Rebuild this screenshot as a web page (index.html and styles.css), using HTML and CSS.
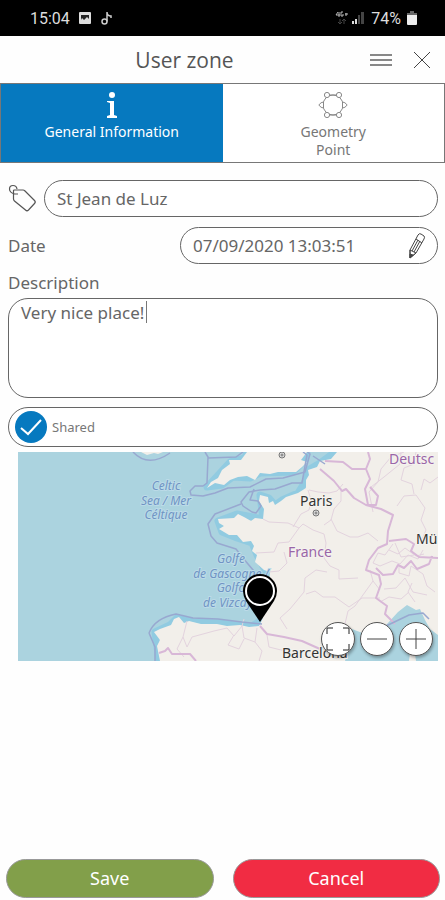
FILE: index.html
```html
<!DOCTYPE html>
<html lang="en">

<head>
    <meta charset="UTF-8">
    <meta name="viewport" content="width=device-width, initial-scale=1.0">
    <title>User zone</title>
    <link rel="stylesheet" href="styles.css">
</head>

<body>
    <div class="status-bar">
        <div class="status-group">
            <span>15:04</span>
            <svg width="14" height="14" viewBox="0 0 14 14">
                <rect x="1" y="1" width="12" height="12" rx="1" fill="#ddd"/>
                <path d="M3 4h8v4L9 6 6 9 4 7l-1 2z" fill="#222"/>
            </svg>
            <svg width="14" height="16" viewBox="0 0 14 16" fill="none" stroke="#ccc" stroke-width="1.500">
                <circle cx="4.500" cy="11.500" r="2.500"/>
                <path d="M7 11.500V2c0 3 2 4 4 4v2"/>
            </svg>
        </div>
        <div class="status-group status-right">
            <svg width="30" height="16" viewBox="0 0 30 16">
                <path d="M3 2L1 5h4M4 2v5M8 2H6v4h2V4M10 4h3M11 3v3" fill="none" stroke="#bbb"/>
                <path d="M5 9v5M3 12l2 2 2-2M9 14V9M7 11l2-2 2 2" fill="none" stroke="#444"/>
                <path d="M17 11h2v3h-2zM20 9h2v5h-2z" fill="#ddd"/>
                <path d="M23 5h2v9h-2zM26 2h3v12h-3z" fill="#444"/>
            </svg>
            <span>74%</span>
            <svg width="10" height="14" viewBox="0 0 10 14">
                <path d="M3 0h4v2h3v4H0V2h3z" fill="#666"/>
                <path d="M0 4h10v9q0 1-1 1H1q-1 0-1-1z" fill="#eee"/>
            </svg>
        </div>
    </div>

    <header class="header">
        <h1>User zone</h1>
        <button class="icon-button" type="button" aria-label="Menu">
            <svg width="24" height="16" viewBox="0 0 24 16" stroke="#888" stroke-width="2">
                <path d="M1 3h22M1 8h22M1 13h22"/>
            </svg>
        </button>
        <button class="icon-button" type="button" aria-label="Close">
            <svg width="18" height="18" viewBox="0 0 18 18" stroke="#444">
                <path d="M1 1l16 16M17 1L1 17"/>
            </svg>
        </button>
    </header>

    <nav class="tabs">
        <button class="tab active" type="button">
            <svg width="12" height="28" viewBox="0 0 12 28" fill="#fff">
                <circle cx="6" cy="4" r="3"/>
                <path d="M1 10h7v14l3 1v2H1v-2l3-1V12l-3-1z"/>
            </svg>
            General Information
        </button>
        <button class="tab" type="button">
            <svg width="30" height="28" viewBox="0 0 30 28" fill="#fff" stroke="#888">
                <circle cx="15" cy="14" r="10"/>
                <path d="M9 4h12M9 24h12"/>
                <circle cx="9" cy="4" r="2.600"/>
                <circle cx="21" cy="4" r="2.600"/>
                <circle cx="9" cy="24" r="2.600"/>
                <circle cx="21" cy="24" r="2.600"/>
                <path d="M.8 14Q3 11 5.500 11v6Q3 17 .8 14zM29.200 14Q27 11 24.500 11v6q2.500 0 4.700-3z"/>
            </svg>
            Geometry<br>Point
        </button>
    </nav>

    <form class="form">
        <div class="row">
            <label for="name" aria-label="Name">
                <svg width="29" height="29" viewBox="0 0 29 29" fill="none" stroke="#555" stroke-width="1.200">
                    <path d="M6 6h9q1 0 2 1l9.500 9.500q1.500 1.500 0 3l-6 6.500q-1.500 1.500-3 0L6.500 17q-1-1-1-2V6.500z"/>
                    <path d="M10 10H6.500Q1.500 8.500 1.500 5t3.500-3.500 4 3.500"/>
                </svg>
            </label>
            <input class="field" id="name" type="text" value="St Jean de Luz">
        </div>

        <div class="row">
            <label class="date-label" for="date">Date</label>
            <div class="date-box">
                <input id="date" type="text" value="07/09/2020 13:03:51">
                <button class="icon-button" type="button" aria-label="Edit date">
                    <svg width="18" height="28" viewBox="0 0 18 28" fill="none" stroke="#444">
                        <path d="M2 18L10 3q1-2 3-1l3 2q1 1 0 3L8 21l-6 5z"/>
                        <path d="M8 7l6 4M4 19L10 8M6 20l6-11"/>
                        <path d="M2 18l6 3-6 5z"/>
                        <path d="M2 22l3 1-3 3z" fill="#444"/>
                    </svg>
                </button>
            </div>
        </div>

        <label class="description-label" for="description">Description</label>
        <div class="description-box">
            <textarea id="description">Very nice place!</textarea>
        </div>

        <label class="shared">
            <input type="checkbox" checked>
            <svg class="check" width="32" height="32" viewBox="0 0 32 32">
                <circle cx="16" cy="16" r="16" fill="#0679bf"/>
                <path d="M6 17l7 6L26 9" fill="none" stroke="#fff" stroke-width="2"/>
            </svg>
            Shared
        </label>

        <div class="map">
            <svg class="map-canvas" viewBox="0 0 420 209">
                <rect width="420" height="209" fill="#abd3df"/>

                <!-- shallow water along the coast -->
                <g class="coast">
                    <path d="M189 35L200 23 212 10 227 6 229 0H289L287 8 275 20 242 21 232 26 215 25 204 33z"/>
                    <path d="M420 0H317L302 11 290 18 288 28 280 41 264 48 257 53 251 46 242 43 245 67 219 62 200 69 204 80 219 86 234 91 239 103 247 118 252 120 249 140 244 168 232 175 202 171 175 170 159 166 152 173 137 180 141 209"/>
                </g>

                <g class="land">
                    <path d="M123 0L129 3 136 1 140 2 145 0z"/>
                    <path d="M189 36L193 30 200 26 204 18 212 12 211 8 223 8 229 0H289L283 8 289 10 284 15 278 20 260 20 252 22 242 21 237 28 229 24 220 25 212 28 206 33 197 31z"/>
                    <path d="M420 0H319L313 7 302 9 299 15 290 18 291 23 288 28 288 36 280 41 268 45 263 49 257 53 255 49 251 51 250 45 242 43 241 49 246 57 245 67 237 66 233 69 226 65 220 62 216 66 200 67 201 71 206 74 201 77 211 83 219 83 225 90 233 89 236 94 234 99 239 103 237 110 246 118 252 120 251 129 249 151 244 168 241 174 231 175 222 173 209 174 199 172 183 172 171 169 166 171 161 165 156 167 153 173 142 177 136 180 142 188 139 194 142 209H327L331 194 328 182 334 177 347 182 362 180 369 172 380 160 389 153 398 158 402 157 407 168 412 177 420 183z"/>
                    <path d="M391 209l1-8 5 1 1 7z"/>
                </g>

                <g class="regions">
                    <path d="M245 67l6 3 19 1 11 5-10 14-11 1-4 9-18 1M275 75l8-13 8-4 2-10-3-10M281 76l4-4 10 6 11 4 2 9-2 15 6 8 9 4 0 9 19-1"/>
                    <path d="M291 38l9 2 11 1 8-2 6-7M323 36l0 13-7 8-3 11-7 5M313 67l6 12 13 6 8 0 10-4 10 8"/>
                    <path d="M266 100l3 11-8 8-10 1M286 140l-14 17-10 9 7 11M286 140l1-14 11-8 11 2M288 142l9-3 8 6 12 0 14 10 13-9 18 0M352 118l3 11 7 9M355 129l-18 25-7 5-4 17"/>
                    <path d="M355 60l-4-20 9-10 3-13 10-12 13-5M383 0l-1 12-16 13-13 10M379 54l7-10 12-1 9 13-4 12 5 10-6 14M396 42l-2-10-11-4 3-12 10-4 2-12M420 25l-8 6-6-4-3 11"/>
                    <path d="M375 92l-8 11-7-2-5 10 7 3 12-5 8 3 8-9 10 4 5-9M371 98l9 4 7-6 11 8 8-2M377 91l6 14 13-2M381 113l0 8 10 3 2-10 12 8 4 12 8 6M366 137l12-1 9-10 8 14 14 3M362 150l9-5 12 2 8-7M397 150l-7-10 4-9"/>
                    <path d="M169 169l-4 16 4 10 5-10 11-3 11-3 13-3 7 8 8-10 2-7M165 185l-6 12 7 8M224 174l2 12 11 4 2-14M216 183l-6 10 11 4 5-10M237 190l7 9-3 10M249 183l2 12 16 4 18 8"/>
                </g>

                <g class="borders">
                    <path d="M302 17l14 12 8 10 4-2 8 9 12 7 15 4 12 6-5 16-1 13-9 4-9 12-3 10 13 5 2 9-5 14 11 8-2 8 10 10"/>
                    <path d="M307 9l18 1 9 7 14 0 4-10-2-7M348 17l4 10-5 10 3 16 8 0 2-9-8-9M371 89l17-2 8 5-3 7 8 6 19 1M358 116l7 7 10-1 5-9 6 3 7-7 6 8 12-5 3-8"/>
                    <path d="M242 174l7 8 17 3 18 4 18 8M141 201l6-2 3-3 4 6 18 0 6 7"/>
                </g>

                <g class="sea-borders">
                    <path d="M115 0Q130 16 152 1M187 0l3 5-1 26-4 3-8 0-5 5 1 4 12 1 12-3 13-5 22-1 16-8 17-1 22-6 5-18-7-6M190 6l28-1 7-5"/>
                    <path d="M285 0l4 3-2 11-3 17-10 0-17 6-15 1-11 2-8 10 2 4 9 6 4 1 5-7-3-5-8-1 4-11M223 52l-26 10-7 10 3 12 6 7 19 6 7 9 5 6 16 19"/>
                    <path d="M131 181Q137 166 158 162l17 4 25 1 24 3 20 2M131 181l6 14 0 14M368 174l23-11 14-2 6 6M398 182l9 10M295 4l12 8"/>
                </g>

                <g class="city-dots">
                    <circle cx="264" cy="3" r="3"/>
                    <circle cx="298" cy="61" r="3"/>
                    <circle cx="264" cy="3" r="1"/>
                    <circle cx="298" cy="61" r="1"/>
                </g>

                <g class="sea-label">
                    <text x="148" y="38">Celtic</text>
                    <text x="148" y="53">Sea / Mer</text>
                    <text x="148" y="67">Céltique</text>
                    <text x="213" y="111">Golfe</text>
                    <text x="213" y="126">de Gascogne /</text>
                    <text x="213" y="140">Golfo</text>
                    <text x="213" y="155">de Vizcaya</text>
                </g>
                <g class="country-label">
                    <text x="270" y="105">France</text>
                    <text x="371" y="12">Deutsc</text>
                </g>
                <g class="city-label">
                    <text x="282" y="54">Paris</text>
                    <text x="398" y="92">Mü</text>
                    <text x="264" y="206">Barcelona</text>
                </g>

                <path d="M242 170l-14-21q-3-5-3-10a17 17 0 0 1 34 0q0 5-3 10z"/>
                <circle cx="242" cy="139" r="14" stroke="#fff" stroke-width="2"/>
            </svg>

            <div class="map-buttons">
                <button type="button" aria-label="Fit to screen">
                    <svg width="24" height="24" viewBox="0 0 24 24" stroke="#222" fill="none">
                        <path d="M1 7V1h6M17 1h6v6M23 17v6h-6M7 23H1v-6"/>
                    </svg>
                </button>
                <button type="button" aria-label="Zoom out">
                    <svg width="24" height="24" viewBox="0 0 24 24" stroke="#444">
                        <path d="M2 12h20"/>
                    </svg>
                </button>
                <button type="button" aria-label="Zoom in">
                    <svg width="24" height="24" viewBox="0 0 24 24" stroke="#444">
                        <path d="M2 12h20M12 2v20"/>
                    </svg>
                </button>
            </div>
        </div>

        <div class="actions">
            <button class="save" type="submit">Save</button>
            <button class="cancel" type="button">Cancel</button>
        </div>
    </form>
</body>

</html>
```

FILE: styles.css
```css
* {
    box-sizing: border-box;
}

body {
    margin: 0;
    min-height: 100vh;
    display: flex;
    flex-direction: column;
    background-color: #fefefe;
    font-family: "Noto Sans", "Open Sans", sans-serif;
    font-size: 17px;
    color: #666;
}

button,
input,
textarea {
    font: inherit;
    color: inherit;
}

button {
    cursor: pointer;
}

svg {
    display: block;
}

.status-bar {
    display: flex;
    justify-content: space-between;
    align-items: center;
    height: 36px;
    padding: 0 28px 0 30px;
    background-color: #000;
    color: #ddd;
    font-family: Roboto, sans-serif;
    font-size: 16px;
}

.status-group {
    display: flex;
    align-items: center;
    gap: 8px;
}

.status-right {
    gap: 6px;
}

.header {
    display: flex;
    align-items: center;
    gap: 20px;
    height: 47px;
    padding: 0 14px 0 20px;
}

.header h1 {
    flex: 1;
    margin: 0;
    text-align: center;
    font-family: "Open Sans", sans-serif;
    font-size: 21px;
    font-weight: 400;
    color: #555;
}

.icon-button {
    padding: 0;
    border: none;
    background: none;
}

.tabs {
    display: flex;
    height: 80px;
    border: 1px solid #777;
}

.tab {
    flex: 1;
    display: flex;
    flex-direction: column;
    align-items: center;
    padding: 7px 0 0;
    border: none;
    background-color: #fff;
    font-size: 14px;
    line-height: 18px;
    color: #777;
}

.tab svg {
    margin-bottom: 4px;
}

.tab.active {
    background-color: #0679bf;
    color: #fff;
}

.form {
    flex: 1;
    display: flex;
    flex-direction: column;
    padding: 17px 7px 2px 8px;
}

.row {
    display: flex;
    align-items: center;
    justify-content: space-between;
    gap: 7px;
    margin-bottom: 10px;
}

.field,
.date-box {
    height: 37px;
    border: 1px solid #666;
    border-radius: 19px;
    background-color: #fff;
}

.field {
    flex: 1;
    min-width: 0;
    padding: 0 12px;
}

.date-box {
    display: flex;
    align-items: center;
    width: 60%;
    padding: 0 11px 0 12px;
}

.date-box input {
    flex: 1;
    min-width: 0;
    padding: 0;
    border: none;
    background: none;
}

.description-label {
    margin-top: -3px;
    line-height: 24px;
}

.description-box {
    position: relative;
    height: 100px;
    margin: 3px 0 9px;
}

/* text cursor */
.description-box::after {
    content: "";
    position: absolute;
    top: 3px;
    left: 138px;
    width: 1px;
    height: 22px;
    background-color: #777;
}

.description-box textarea {
    display: block;
    width: 100%;
    height: 100%;
    padding: 2px 12px;
    border: 1px solid #666;
    border-radius: 20px;
    background-color: #fff;
    line-height: 24px;
    resize: none;
}

.shared {
    display: flex;
    align-items: center;
    gap: 5px;
    height: 40px;
    padding: 0 6px;
    margin-bottom: 5px;
    border: 1px solid #666;
    border-radius: 20px;
    background-color: #fff;
    font-size: 13px;
    color: #777;
}

.shared input {
    position: absolute;
    opacity: 0;
}

.shared input:not(:checked) + .check {
    opacity: 0.3;
}

.map {
    position: relative;
    margin-left: 10px;
}

.map-canvas {
    width: 100%;
    height: auto;
}

.coast {
    fill: none;
    stroke: #91cbe1;
    stroke-width: 7;
    stroke-linejoin: round;
}

.land {
    fill: #f2efea;
}

.regions,
.borders,
.sea-borders {
    fill: none;
    stroke-linejoin: round;
}

.regions {
    stroke: #e3d3de;
}

.borders {
    stroke: #d8b7d7;
    stroke-width: 2;
}

.sea-borders {
    stroke: #98a8d0;
    stroke-width: 1.5;
}

.city-dots {
    fill: #ddd;
    stroke: #777;
}

.sea-label,
.country-label,
.city-label {
    paint-order: stroke;
    stroke: #f5f3ef;
    stroke-width: 2;
}

.sea-label {
    fill: #6f94c4;
    stroke: #bcdbe8;
    font-size: 12px;
    font-style: italic;
    text-anchor: middle;
}

.country-label {
    fill: #9a66a8;
    font-size: 14px;
}

.city-label {
    fill: #333;
    font-size: 14px;
}

.map-buttons {
    position: absolute;
    right: 5px;
    bottom: 5px;
    display: flex;
    gap: 5px;
}

.map-buttons button {
    display: flex;
    align-items: center;
    justify-content: center;
    width: 34px;
    height: 34px;
    padding: 0;
    border: 1px solid #555;
    border-radius: 50%;
    background-color: #fff;
    box-shadow: 1px 2px 3px rgba(0, 0, 0, 0.3);
}

.actions {
    display: flex;
    gap: 19px;
    margin: auto -2px 0;
}

.actions button {
    flex: 1;
    height: 39px;
    padding: 0 0 2px;
    border: 1px solid #999;
    border-radius: 20px;
    color: #fff;
    font-size: 18px;
}

.actions .save {
    background-color: #829f4a;
}

.actions .cancel {
    background-color: #f12c43;
}
```
